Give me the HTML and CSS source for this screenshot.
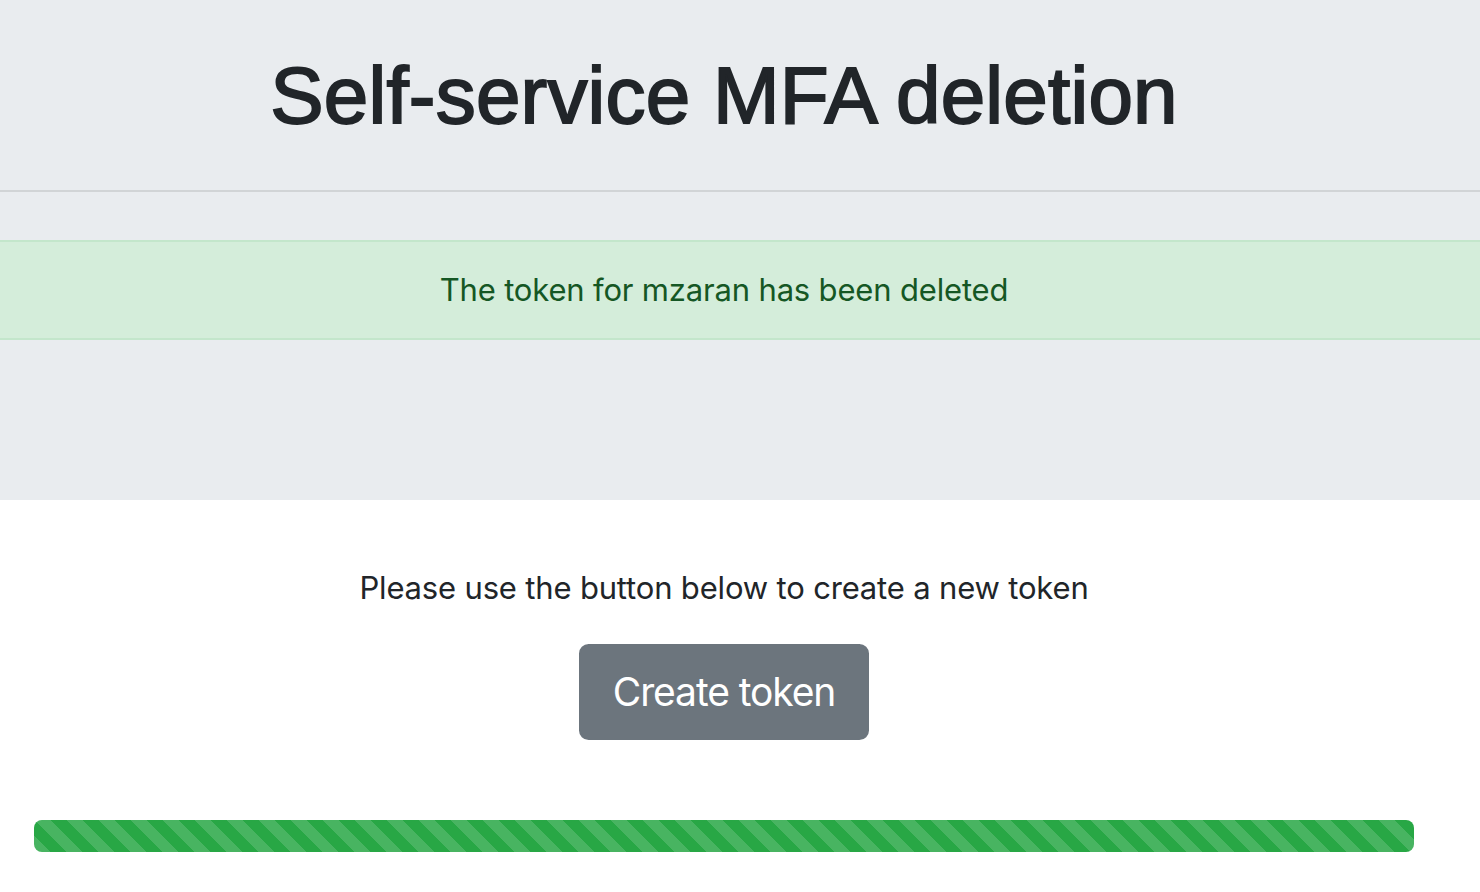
FILE: index.html
```html
<!DOCTYPE html>
<html lang="en">
<head>
<meta charset="utf-8">
<title>Self-service MFA deletion</title>
<link rel="stylesheet" href="styles.css">
</head>
<body>
<header class="jumbo">
  <div class="jumbo-inner">
    <h1 class="title">Self-service MFA deletion</h1>
  </div>
  <hr class="rule">
  <div class="alert">
    <div class="jumbo-inner">The token for mzaran has been deleted</div>
  </div>
</header>
<main class="main">
  <p class="lead-text">Please use the button below to create a new token</p>
  <button class="btn" type="button">Create token</button>
  <div class="progress"><div class="progress-bar" style="width:100%"></div></div>
</main>
</body>
</html>
```

FILE: styles.css
```css
* { box-sizing: border-box; }
html, body { margin: 0; padding: 0; }
body {
  background: #fff;
  color: #212529;
  font-family: Inter, "Noto Sans", "Liberation Sans", sans-serif;
  font-size: 31px;
  letter-spacing: -0.17px;
  line-height: 48px;
}
.jumbo {
  background: #e9ecef;
  height: 500px;
  padding-top: 48px;
  margin-bottom: 64px;
}
.jumbo-inner {
  width: 1448px;
  text-align: center;
}
.title {
  margin: 0;
  font-family: "Liberation Sans", Arial, sans-serif;
  font-weight: 400;
  font-size: 80px;
  line-height: 96px;
  letter-spacing: 0.2px;
  color: #212529;
  -webkit-text-stroke: 1.9px #212529;
}
.rule {
  margin: 46px 0 0;
  border: 0;
  border-top: 2px solid rgba(0, 0, 0, 0.1);
  height: 0;
}
.alert {
  margin-top: 48px;
  background: #d4edda;
  border-top: 2px solid #c3e6cb;
  border-bottom: 2px solid #c3e6cb;
  color: #155724;
  padding: 24px 0;
  height: 100px;
}
.main {
  width: 1448px;
  display: flex;
  flex-direction: column;
  align-items: center;
}
.lead-text {
  margin: 0 0 32px;
}
.btn {
  font-family: Inter, "Noto Sans", "Liberation Sans", sans-serif;
  font-size: 39px;
  letter-spacing: -1.1px;
  line-height: 60px;
  padding: 16px 32px;
  border: 2px solid #6c757d;
  background: #6c757d;
  color: #fff;
  border-radius: 9.6px;
  cursor: pointer;
}
.progress {
  margin-top: 80px;
  align-self: stretch;
  margin-left: 34px;
  margin-right: 34px;
  height: 32px;
  border-radius: 8px;
  background: #e9ecef;
  overflow: hidden;
  display: flex;
}
.progress-bar {
  background-color: #28a745;
  background-image: linear-gradient(45deg, rgba(255,255,255,.15) 25%, transparent 25%, transparent 50%, rgba(255,255,255,.15) 50%, rgba(255,255,255,.15) 75%, transparent 75%, transparent);
  background-size: 32px 32px;
  height: 100%;
}
```
